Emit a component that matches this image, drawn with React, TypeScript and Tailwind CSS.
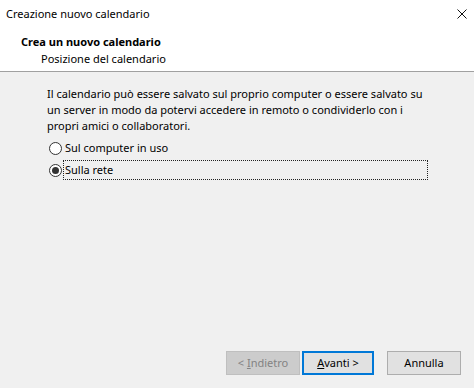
import React, { useState } from "react";

function Radio({ checked }: { checked: boolean }) {
	return (
		<span className="w-[13px] h-[13px] rounded-full border border-[#333333] bg-white flex items-center justify-center shrink-0">
			{checked && <span className="w-[7px] h-[7px] rounded-full bg-[#333333]" />}
		</span>
	);
}

export default function App() {
	const [choice, setChoice] = useState("rete");
	return (
		<div className="w-[474px] h-[388px] bg-[#f0f0f0] flex flex-col text-[11px] leading-[16px] text-black font-['Noto_Sans',sans-serif]">
			<div className="h-[28px] bg-white flex items-center justify-between pl-[6px] pr-[7px]">
				<span>Creazione nuovo calendario</span>
				<svg width="10" height="10" viewBox="0 0 10 10">
					<path d="M0.5 0.5 L9.5 9.5 M9.5 0.5 L0.5 9.5" stroke="#111" strokeWidth="1" />
				</svg>
			</div>
			<div className="bg-white h-[44px] border-b border-[#a0a0a0] pt-[6px]">
				<p className="pl-[21px] font-bold">Crea un nuovo calendario</p>
				<p className="pl-[41px] mt-[1px]">Posizione del calendario</p>
			</div>
			<div className="pl-[47px] pt-[14px]">
				<p className="w-[385px]">
					Il calendario può essere salvato sul proprio computer o essere salvato su un server in modo da potervi accedere in remoto o condividerlo con i propri amici o collaboratori.
				</p>
				<div className="mt-[4px] flex flex-col gap-[2px]">
					<button
						type="button"
						onClick={() => setChoice("computer")}
						className="h-[20px] flex items-center ml-[2px]"
					>
						<Radio checked={choice === "computer"} />
						<span className={`ml-[1px] h-[20px] w-[365px] flex items-center pl-[1px] text-left border border-dotted ${choice === "computer" ? "border-[#222]" : "border-transparent"}`}>
							Sul computer in uso
						</span>
					</button>
					<button
						type="button"
						onClick={() => setChoice("rete")}
						className="h-[20px] flex items-center ml-[2px]"
					>
						<Radio checked={choice === "rete"} />
						<span className={`ml-[1px] h-[20px] w-[365px] flex items-center pl-[1px] text-left border border-dotted ${choice === "rete" ? "border-[#222]" : "border-transparent"}`}>
							Sulla rete
						</span>
					</button>
				</div>
			</div>
			<div className="mt-auto flex justify-end pr-[13px] pb-[13px]">
				<button
					type="button"
					disabled
					className="w-[74px] h-[24px] bg-[#cccccc] border border-[#bfbfbf] text-[#838383]"
				>
					&lt; <span className="underline">I</span>ndietro
				</button>
				<button
					type="button"
					className="w-[72px] h-[24px] ml-[2px] bg-[#e1e1e1] border-2 border-[#0078d7]"
				>
					<span className="underline">A</span>vanti &gt;
				</button>
				<button
					type="button"
					className="w-[74px] h-[24px] ml-[13px] bg-[#e1e1e1] border border-[#adadad]"
				>
					Annulla
				</button>
			</div>
		</div>
	);
}
